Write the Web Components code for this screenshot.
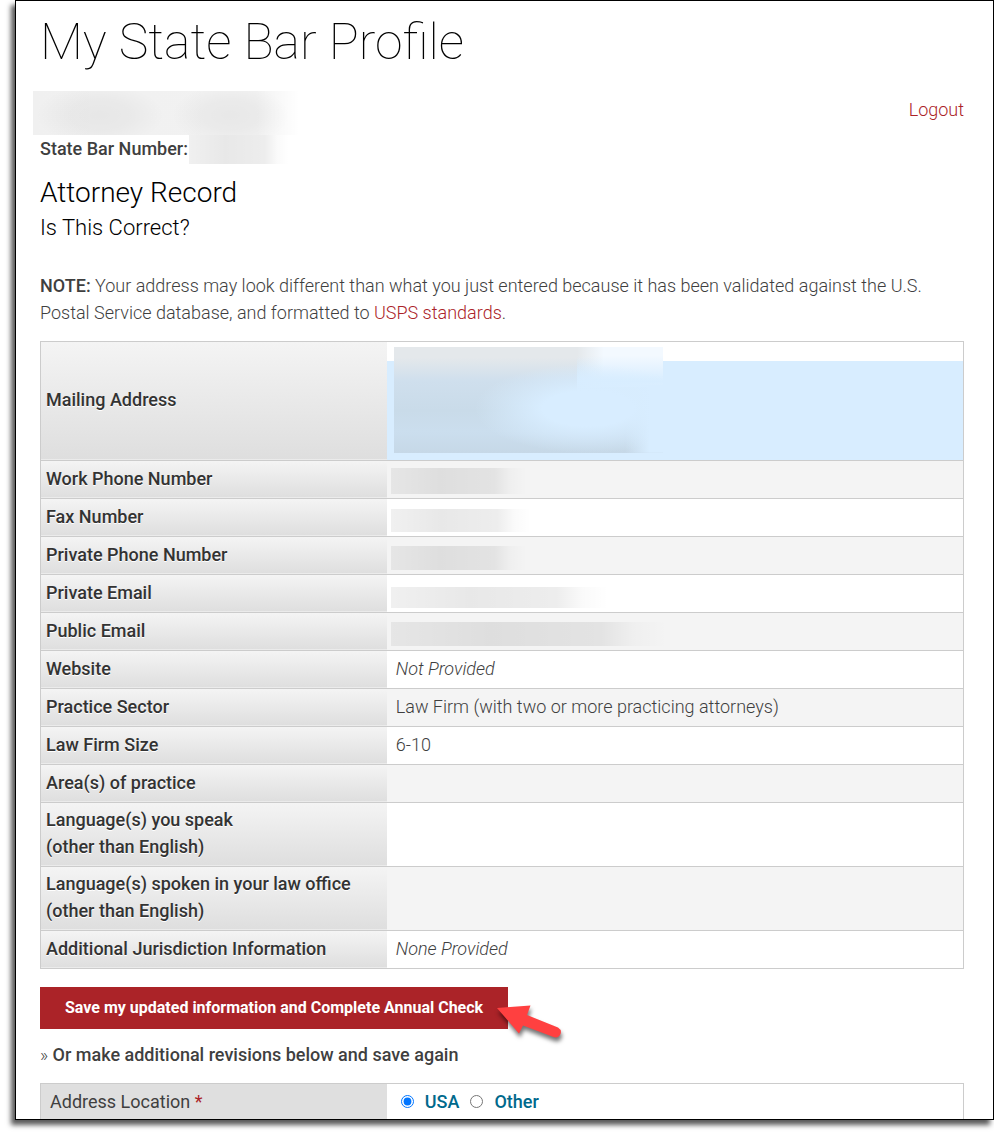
<!DOCTYPE html>
<html lang="en">
<head>
<meta charset="utf-8">
<meta name="viewport" content="width=device-width, initial-scale=1">
<title>My State Bar Profile</title>
<style>
  body {
    margin: 0;
    min-height: 100vh;
    background: #fff;
    color: #3f3f3f;
    font: 300 18px/27px Roboto, sans-serif;
  }
</style>
</head>
<body>
<profile-page>
  <profile-header heading="My State Bar Profile"></profile-header>
  <section-title heading="Attorney Record">Is This Correct?</section-title>
  <address-note></address-note>
  <record-table></record-table>
  <save-action note="Or make additional revisions below and save again">Save my updated information and Complete Annual Check</save-action>
  <location-field label="Address Location"></location-field>
</profile-page>

<script>
// attaches an open root and fills it from a template
function render(host, html) {
  const template = document.createElement('template');
  template.innerHTML = html;
  host.attachShadow({ mode: 'open' });
  host.shadowRoot.appendChild(template.content.cloneNode(true));
}

class ProfilePage extends HTMLElement {
  constructor() {
    super();
    render(this, `
      <style>
        :host {
          display: block;
          box-sizing: border-box;
          height: calc(100vh - 15px);
          margin-left: 15px;
          padding: 14px 29px 0 24px;
          overflow: hidden;
          border: 1px solid #000;
          box-shadow: -4px 5px 5px rgba(0, 0, 0, 0.65);
        }
      </style>
      <slot></slot>
    `);
  }
}

// smeared block that hides a private value
class HiddenValue extends HTMLElement {
  constructor() {
    super();
    render(this, `
      <style>
        :host {
          display: block;
          width: 100%;
          height: 24px;
          background:
            linear-gradient(90deg, rgba(0, 0, 0, 0.06), rgba(0, 0, 0, 0.09) 36%, rgba(0, 0, 0, 0.08) 60%, rgba(0, 0, 0, 0.07) 76%, rgba(0, 0, 0, 0.02) 88%, transparent);
        }
        :host([kind="name"]) {
          background:
            radial-gradient(ellipse 24% 70% at 25% 55%, rgba(0, 0, 0, 0.045), rgba(0, 0, 0, 0.03) 50%, transparent),
            radial-gradient(ellipse 22% 70% at 74% 55%, rgba(0, 0, 0, 0.045), rgba(0, 0, 0, 0.03) 50%, transparent),
            linear-gradient(90deg, rgba(0, 0, 0, 0.06), rgba(0, 0, 0, 0.05) 84%, transparent);
        }
        :host([kind="address"]) {
          background:
            radial-gradient(ellipse 42% 42% at 72% 58%, #d8edff 40%, rgba(216, 237, 255, 0)),
            linear-gradient(90deg, rgba(216, 237, 255, 0) 86%, #d8edff 95%) 0 100% / 100% 64% no-repeat,
            linear-gradient(rgba(216, 237, 255, 0) 8%, #d8edff 32%, rgba(216, 237, 255, 0) 78%) 100% 0 / 32% 100% no-repeat,
            linear-gradient(90deg, rgba(243, 249, 255, 0) 68%, #f3f9ff 78%) 0 0 / 100% 40px no-repeat,
            linear-gradient(#e4e8eb 10%, #cfdfed 32%, #c9dbe9 60%, #cbdeee 80%, #c6d8e7);
        }
      </style>
    `);
  }
}

class ProfileHeader extends HTMLElement {
  constructor() {
    super();
    render(this, `
      <style>
        :host { display: block; }
        h1 {
          margin: 0;
          color: #000;
          font-size: 50px;
          font-weight: 100;
          line-height: 54px;
        }
        .account {
          display: flex;
          justify-content: space-between;
          align-items: flex-start;
          margin-top: 22px;
        }
        .name {
          width: 267px;
          height: 44px;
          margin-left: -7px;
        }
        .number {
          display: flex;
          align-items: flex-start;
          gap: 1px;
        }
        .number hidden-value {
          width: 100px;
          height: 29px;
        }
        strong { font-weight: 500; }
        a {
          margin-top: 5px;
          color: #ab2328;
          text-decoration: none;
        }
      </style>
      <h1></h1>
      <div class="account">
        <div>
          <hidden-value class="name" kind="name"></hidden-value>
          <div class="number"><strong>State Bar Number:</strong><hidden-value></hidden-value></div>
        </div>
        <a href="#logout">Logout</a>
      </div>
    `);
  }

  connectedCallback() {
    this.shadowRoot.querySelector('h1').textContent = this.getAttribute('heading');
  }
}

class SectionTitle extends HTMLElement {
  constructor() {
    super();
    render(this, `
      <style>
        :host {
          display: block;
          color: #000;
        }
        h2, h3 {
          margin: 0;
          font-weight: 300;
        }
        h2 {
          margin-top: 11px;
          font-size: 28px;
          line-height: 36px;
        }
        h3 {
          font-size: 22px;
          line-height: 34px;
        }
      </style>
      <h2></h2>
      <h3><slot></slot></h3>
    `);
  }

  connectedCallback() {
    this.shadowRoot.querySelector('h2').textContent = this.getAttribute('heading');
  }
}

class AddressNote extends HTMLElement {
  constructor() {
    super();
    render(this, `
      <style>
        :host { display: block; }
        p { margin: 27px 0 15px; }
        strong { font-weight: 500; }
        a {
          color: #ab2328;
          text-decoration: none;
        }
      </style>
      <p><strong>NOTE:</strong> Your address may look different than what you just entered because it has been validated against the U.S. Postal Service database, and formatted to <a href="#usps">USPS standards</a>.</p>
    `);
  }
}

const records = [
  { label: 'Mailing Address', hidden: [269, 106], kind: 'address' },
  { label: 'Work Phone Number', hidden: [136, 26] },
  { label: 'Fax Number', hidden: [140, 23] },
  { label: 'Private Phone Number', hidden: [136, 24] },
  { label: 'Private Email', hidden: [218, 21] },
  { label: 'Public Email', hidden: [276, 24] },
  { label: 'Website', value: '<em>Not Provided</em>' },
  { label: 'Practice Sector', value: 'Law Firm (with two or more practicing attorneys)' },
  { label: 'Law Firm Size', value: '6-10' },
  { label: 'Area(s) of practice', value: '' },
  { label: 'Language(s) you speak<br>(other than English)', value: '' },
  { label: 'Language(s) spoken in your law office<br>(other than English)', value: '' },
  { label: 'Additional Jurisdiction Information', value: '<em>None Provided</em>' }
];

class RecordTable extends HTMLElement {
  constructor() {
    super();
    const rows = records.map(record => {
      let value = record.value;
      if (record.hidden) {
        const [width, height] = record.hidden;
        value = `<div class="hidden"><hidden-value kind="${record.kind || 'line'}" style="width: ${width}px; height: ${height}px"></hidden-value></div>`;
      }
      return `<tr class="${record.kind || ''}"><th scope="row">${record.label}</th><td>${value}</td></tr>`;
    }).join('');

    render(this, `
      <style>
        :host { display: block; }
        table {
          width: 100%;
          border: 1px solid #ccc;
          border-bottom: 0;
          border-spacing: 0;
          table-layout: fixed;
        }
        th, td {
          border-bottom: 1px solid #ccc;
          text-align: left;
          vertical-align: middle;
        }
        th {
          width: 37.5%;
          box-sizing: border-box;
          padding: 3px 5px 6px;
          color: #333;
          font-weight: 500;
          text-shadow: 0 1px 0 #fff;
          background: linear-gradient(#f4f4f4, #dedede);
          box-shadow: inset 0 -1px 0 #ebebeb;
        }
        td {
          height: 27px;
          padding: 4px 8px 6px 9px;
        }
        tr:nth-child(even) td { background: #f4f4f4; }
        .hidden {
          display: flex;
          align-items: flex-end;
          min-height: 29px;
          margin: 0 0 -2px -5px;
        }
        .address td { background: linear-gradient(#fff 19px, #d8edff 19px); }
        .address .hidden {
          min-height: 108px;
          align-items: center;
          margin: 0 0 0 -2px;
        }
      </style>
      <table><tbody>${rows}</tbody></table>
    `);
  }
}

class SaveAction extends HTMLElement {
  constructor() {
    super();
    render(this, `
      <style>
        :host {
          display: block;
          margin-top: 18px;
        }
        .save {
          position: relative;
          width: fit-content;
        }
        button {
          display: block;
          padding: 8px 25px;
          border: 0;
          background: #ab2328;
          color: #fff;
          font: 700 16px/26px Roboto, sans-serif;
          cursor: pointer;
        }
        /* pointer lies over the button's right edge */
        svg {
          position: absolute;
          left: calc(100% - 14px);
          top: 14px;
          overflow: visible;
          filter: drop-shadow(1px 4px 2px rgba(0, 0, 0, 0.55));
          pointer-events: none;
        }
        p { margin: 12px 0 15px; }
        .note { font-weight: 500; }
      </style>
      <div class="save">
        <button type="button"><slot></slot></button>
        <svg width="70" height="50" viewBox="0 0 70 50" aria-hidden="true">
          <path fill="#ff4040" d="M3 7L36.500 4.500L33 14L64 26.500Q68 29 66.500 33Q64.500 37.500 59.500 36L29 24.500L25 32.500Z"/>
        </svg>
      </div>
      <p>» <span class="note"></span></p>
    `);
  }

  connectedCallback() {
    this.shadowRoot.querySelector('.note').textContent = this.getAttribute('note');
  }
}

class LocationField extends HTMLElement {
  constructor() {
    super();
    render(this, `
      <style>
        :host { display: block; }
        fieldset {
          display: grid;
          grid-template-columns: 37.5% 1fr;
          min-width: 0;
          margin: 0;
          padding: 0;
          border: 1px solid #ccc;
        }
        .label {
          padding: 4px 9px 6px;
          background: #dfdfdf;
          font-weight: 400;
        }
        .required { color: #ab2328; }
        .options {
          display: flex;
          align-items: center;
          padding: 4px 14px 6px;
          color: #00698c;
          font-weight: 500;
        }
        input {
          width: 13px;
          height: 13px;
          margin: 0;
        }
        label { margin: 0 11px; }
      </style>
      <fieldset aria-labelledby="label">
        <div class="label" id="label"><span class="text"></span> <span class="required">*</span></div>
        <div class="options">
          <input type="radio" name="location" id="usa" checked><label for="usa">USA</label>
          <input type="radio" name="location" id="other"><label for="other">Other</label>
        </div>
      </fieldset>
    `);
  }

  connectedCallback() {
    this.shadowRoot.querySelector('.text').textContent = this.getAttribute('label');
  }
}

customElements.define('hidden-value', HiddenValue);
customElements.define('profile-page', ProfilePage);
customElements.define('profile-header', ProfileHeader);
customElements.define('section-title', SectionTitle);
customElements.define('address-note', AddressNote);
customElements.define('record-table', RecordTable);
customElements.define('save-action', SaveAction);
customElements.define('location-field', LocationField);
</script>
</body>
</html>
